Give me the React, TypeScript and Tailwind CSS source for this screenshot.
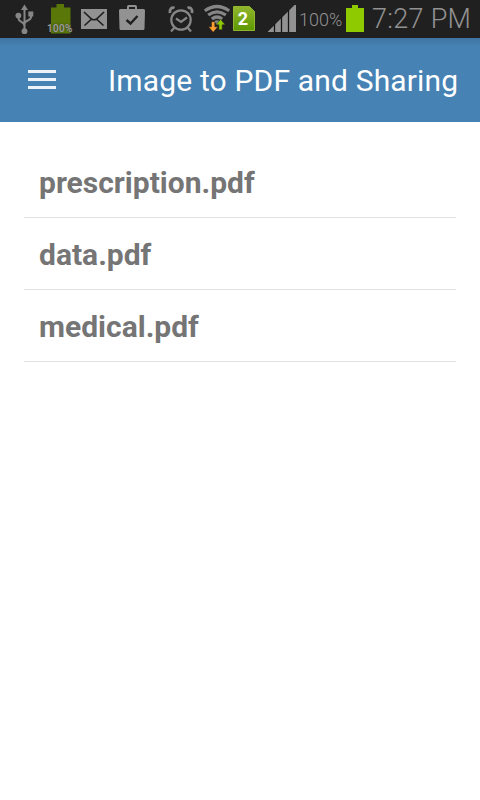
import React from "react";

const files = ["prescription.pdf", "data.pdf", "medical.pdf"];

function UsbIcon() {
  return (
    <svg className="ml-[14px] shrink-0" width="22" height="38" viewBox="14 0 22 38" fill="none" stroke="#868686" strokeWidth="2">
      <path d="M24.500 9v22M18.500 16v2.500c0 4 6 3 6 7.500M31 14v3c0 4-6.500 3-6.500 7" />
      <g fill="#868686" stroke="none">
        <path d="M24.500 4.500l3.500 5.500h-7z" />
        <circle cx="18.400" cy="15.600" r="2.900" />
        <rect x="28.300" y="11.500" width="5" height="5" />
        <circle cx="24.500" cy="31.200" r="2.900" />
      </g>
    </svg>
  );
}

function ChargeLevel() {
  return (
    <div className="relative ml-[11px] h-[38px] w-[26px] shrink-0">
      <svg width="26" height="38" viewBox="47 0 26 38">
        <path d="M56.500 4h7.500v3.500h6.500v26H51V7.500h5.500z" fill="#5a780a" />
      </svg>
      <span className="absolute left-0 top-[23px] text-[10px] font-medium leading-[12px] tracking-[0.300px] text-[#a0a0a0] [text-shadow:0_0_2px_#333]">100%</span>
    </div>
  );
}

function MailIcon() {
  return (
    <svg className="ml-[8px] shrink-0" width="26" height="38" viewBox="81 0 26 38">
      <path d="M81 9h26v20H81z" fill="#929292" />
      <path d="M84 12l7.500 7q2.500 1.500 5 0l7.500-7M84.500 25.500l6.500-6M103.500 25.500l-6.500-6" fill="none" stroke="#202020" strokeWidth="1.700" />
    </svg>
  );
}

function BagIcon() {
  return (
    <svg className="ml-[12px] shrink-0" width="26" height="38" viewBox="119 0 26 38">
      <path d="M128 10V6.800q0-.8.8-.8h6.400q.8 0 .8.800V10" fill="none" stroke="#929292" strokeWidth="2" />
      <path d="M120.500 9h23q1.500 0 1.500 1.500l-.5 18q0 1.500-1.500 1.500h-22q-1.500 0-1.500-1.500l-.5-18Q119 9 120.500 9z" fill="#929292" />
      <path d="M126.500 20l4 3.500 7-7.500" fill="none" stroke="#202020" strokeWidth="2.400" />
    </svg>
  );
}

function AlarmIcon() {
  return (
    <svg className="ml-[23px] shrink-0" width="26" height="38" viewBox="168 0 26 38" fill="none" stroke="#868686" strokeWidth="2.200">
      <circle cx="181" cy="20" r="9.700" />
      <path d="M176 18.500l5 3.500 6-4.500M174.500 27.500l-3.500 4M187.500 27.500l3.500 4" />
      <path d="M174.500 8q-2-1-3.500.5t-1 4.500M187.500 8q2-1 3.500.5t1 4.500" strokeWidth="2.800" />
    </svg>
  );
}

function WifiIcon() {
  return (
    <svg className="ml-[10px] shrink-0" width="26" height="38" viewBox="204 0 26 38">
      <g fill="none" stroke="#868686" strokeWidth="3.200">
        <path d="M204.800 10.800q12.200-8.600 24.400 0" />
        <path d="M208.200 15q8.800-6.400 17.600 0" />
        <path d="M211.800 19q5.200-4 10.400 0" />
      </g>
      <path d="M214 21.300q3-2 6 0l-3 3.500z" fill="#868686" />
      <path d="M211.500 21.700h3.300v5.100h3.100l-4.700 5.400-4.700-5.400h3z" fill="#ff9f2e" stroke="#202020" strokeWidth=".5" />
      <path d="M220.500 19.300l4.700 5.500h-3v5h-3.300v-5h-3z" fill="#8fc900" stroke="#202020" strokeWidth=".5" />
    </svg>
  );
}

function SimBadge() {
  return (
    <div className="relative ml-[3px] h-[38px] w-[22px] shrink-0">
      <svg width="22" height="38" viewBox="233 0 22 38">
        <defs>
          <linearGradient id="sim" x1="0" y1="0" x2="0" y2="1">
            <stop stopColor="#92b62e" />
            <stop offset="1" stopColor="#5c9800" />
          </linearGradient>
        </defs>
        <path d="M233.500 6.500h16l5 5V30.500h-21z" fill="url(#sim)" stroke="#8fb62e" strokeWidth="1" />
      </svg>
      <span className="absolute left-0 top-[9px] w-[20px] text-center text-[18px] font-bold leading-[20px] text-white">2</span>
    </div>
  );
}

function SignalIcon() {
  return (
    <svg className="ml-[13px] shrink-0" width="28" height="38" viewBox="268 0 28 38">
      <path d="M267.500 32L294.500 5H296v27z" fill="#929292" />
      <path d="M274.500 24v8.500M281.500 17v15.500M288.500 10v22.500" stroke="#151515" strokeWidth="1.300" />
    </svg>
  );
}

function BatteryIcon() {
  return (
    <svg className="ml-[4px] shrink-0" width="18" height="38" viewBox="346 0 18 38">
      <path d="M352 5h6v3h6v24h-18V8h6z" fill="#8fca00" />
    </svg>
  );
}

export default function App() {
  return (
    <div className="h-[800px] w-[480px] overflow-hidden bg-white font-['Roboto',sans-serif]">
      <div className="flex h-[38px] items-center bg-[#202020] text-[#929292]">
        <UsbIcon />
        <ChargeLevel />
        <MailIcon />
        <BagIcon />
        <AlarmIcon />
        <WifiIcon />
        <SimBadge />
        <SignalIcon />
        <span className="ml-[3px] w-[43px] shrink-0 whitespace-nowrap pt-[2px] text-[18px] font-light leading-[20px]">100%</span>
        <BatteryIcon />
        <span className="ml-[8px] whitespace-nowrap text-[27px] font-light leading-[38px] tracking-[0.300px]">7:27 PM</span>
      </div>
      <header className="flex h-[84px] items-center bg-[#4682b4] bg-linear-to-b from-[#3f74a1] to-[#4682b4] to-10% pl-[28px] text-white">
        <button aria-label="Menu" className="-mt-px flex w-[28px] flex-col gap-[5px]">
          <span className="h-[3px] bg-white/90" />
          <span className="h-[3px] bg-white/90" />
          <span className="h-[3px] bg-white/90" />
        </button>
        <h1 className="ml-[52px] whitespace-nowrap pt-[2px] text-[30px] leading-[40px] tracking-[0.160px]">Image to PDF and Sharing</h1>
      </header>
      <ul className="mx-6 pt-6">
        {files.map((name) => (
          <li key={name} className="flex h-[72px] items-center border-b border-[#e0e0e0] pl-[15px] pt-[2px] text-[30px] font-bold leading-[40px] text-[#757575]">
            {name}
          </li>
        ))}
      </ul>
    </div>
  );
}
